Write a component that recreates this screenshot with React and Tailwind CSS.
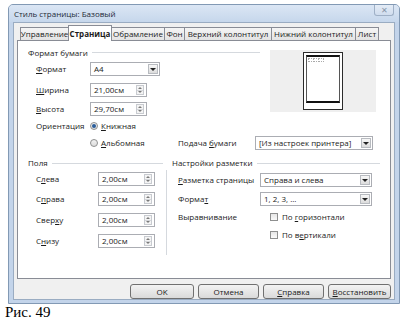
import React from 'react';

const U = ({ children }) => <span className="underline underline-offset-[1px]">{children}</span>;

const Spin = () => (
  <div className="ml-auto mr-[2px] flex h-[10px] w-[8px] flex-col border border-[#c8cbd0] bg-[#f4f4f4]">
    <div className="flex flex-1 items-center justify-center border-b border-[#d4d6da]">
      <div className="h-0 w-0 border-x-[2px] border-b-[2px] border-x-transparent border-b-[#7a7a7a]" />
    </div>
    <div className="flex flex-1 items-center justify-center">
      <div className="h-0 w-0 border-x-[2px] border-t-[2px] border-x-transparent border-t-[#7a7a7a]" />
    </div>
  </div>
);

const Drop = () => (
  <div className="ml-auto mr-[1px] flex h-[10px] w-[10px] items-center justify-center border border-[#b8bbc0] bg-gradient-to-b from-[#f8f8f8] to-[#dcdcdc]">
    <div className="h-0 w-0 border-x-[3px] border-t-[3px] border-x-transparent border-t-[#222]" />
  </div>
);

const Box = ({ w, value, spin }) => (
  <div className={`flex h-[14px] items-center border border-[#abadb3] bg-white pl-[3px] ${w}`}>
    <span>{value}</span>
    {spin ? <Spin /> : <Drop />}
  </div>
);

const Radio = ({ on }) => (
  <div className="flex h-[8px] w-[8px] items-center justify-center rounded-full border border-[#8e8f8f] bg-gradient-to-b from-[#f2f2f2] to-[#dcdcdc]">
    {on && <div className="h-[4px] w-[4px] rounded-full bg-[#2a5d9a]" />}
  </div>
);

const Check = () => <div className="h-[8px] w-[8px] border border-[#8e8f8f] bg-gradient-to-b from-[#e6e6e6] to-[#fafafa]" />;

const GroupTitle = ({ children }) => (
  <div className="flex h-[10px] items-center">
    <span>{children}</span>
    <div className="ml-[4px] h-px flex-1 bg-[#d5d9de]" />
  </div>
);

const tabs = [
  ['Управление', 'w-[49px]'],
  ['Страница', 'w-[44px]'],
  ['Обрамление', 'w-[54px]'],
  ['Фон', 'w-[21px]'],
  ['Верхний колонтитул', 'w-[88px]'],
  ['Нижний колонтитул', 'w-[85px]'],
  ['Лист', 'w-[24px]'],
];

const buttons = [
  [<>OK</>, 'w-[64px]'],
  [<>Отмена</>, 'w-[61px]'],
  [<><U>С</U>правка</>, 'w-[61px]'],
  [<><U>В</U>осстановить</>, 'w-[63px]'],
];

export default function App() {
  return (
    <div className="h-[320px] w-[416px] overflow-hidden bg-white pt-[4px] font-['Open_Sans',sans-serif] text-[8px] leading-none text-[#1b1b1b]">
      <div className="ml-[8px] flex h-[300px] w-[392px] flex-col rounded-t-[5px] border border-[#8299b4] bg-[#c3d4ea]">
        <div className="flex h-[17px] items-center rounded-t-[4px] bg-gradient-to-b from-[#dbe6f4] to-[#c6d7ec] pl-[5px] pr-[5px]">
          <span className="text-[#1e2a38]">Стиль страницы: Базовый</span>
          <div className="ml-auto flex h-[11px] w-[20px] items-center justify-center self-start rounded-b-[3px] border border-t-0 border-[#9fb0c6] bg-gradient-to-b from-[#e4ecf6] to-[#d0ddee] text-[8px] text-[#8795a6]">
            ✕
          </div>
        </div>

        <div className="mx-[4px] mb-[3px] flex flex-1 flex-col border border-[#9aacc2] bg-[#f0f0f0]">
          <div className="relative z-10 flex h-[17px] items-end pl-[6px]">
            {tabs.map(([label, w], i) => (
              <div
                key={label}
                className={`${w} ${i > 0 ? '-ml-px' : ''} flex items-center justify-center border border-b-0 border-[#898c95] ${
                  i === 1
                    ? '-mb-px h-[16px] bg-white font-bold'
                    : 'h-[13px] bg-gradient-to-b from-[#f5f5f5] to-[#e3e3e3]'
                }`}
              >
                {label}
              </div>
            ))}
          </div>

          <div className="ml-[3px] h-[239px] w-[374px] border border-[#898c95] bg-white pt-[6px]">
            <div className="flex">
              <div className="w-[242px] pl-[10px]">
                <div className="flex h-[11px] items-center">
                  <span>Формат бумаги</span>
                  <div className="ml-[4px] h-px flex-1 bg-[#d5d9de]" />
                </div>
                <div className="mt-[4px] flex h-[14px] items-center pl-[8px]">
                  <span className="w-[54px]"><U>Ф</U>ормат</span>
                  <Box w="w-[70px]" value="A4" />
                </div>
                <div className="mt-[7px] flex h-[14px] items-center pl-[8px]">
                  <span className="w-[54px]"><U>Ш</U>ирина</span>
                  <Box w="w-[57px]" value="21,00см" spin />
                </div>
                <div className="mt-[5px] flex h-[14px] items-center pl-[8px]">
                  <span className="w-[54px]"><U>В</U>ысота</span>
                  <Box w="w-[57px]" value="29,70см" spin />
                </div>
              </div>
              <div className="ml-[10px] mt-[3px] flex h-[62px] w-[106px] justify-center bg-[#efefef] pt-[2px]">
                <div className="h-[58px] w-[40px] border border-[#2b2b2b] bg-white p-[2px]">
                  <div className="h-[48px] w-full border-x border-y-2 border-x-[#555] border-y-[#111] pl-[1px] pt-[1px]">
                    <div className="flex h-[4px] w-[16px]">
                      <div className="flex-1 border border-dotted border-[#aaa]" />
                      <div className="-ml-px flex-1 border border-dotted border-[#aaa]" />
                      <div className="-ml-px flex-1 border border-dotted border-[#aaa]" />
                    </div>
                  </div>
                </div>
              </div>
            </div>

            <div className="mt-[4px] flex h-[12px] items-center pl-[18px]">
              <span className="w-[54px]">Ориентация</span>
              <Radio on />
              <span className="ml-[3px]"><U>К</U>нижная</span>
            </div>
            <div className="mt-[4px] flex h-[14px] items-center pl-[18px]">
              <div className="w-[54px]" />
              <div className="flex w-[88px] items-center">
                <Radio />
                <span className="ml-[3px]"><U>А</U>льбомная</span>
              </div>
              <span className="w-[77px]">Подача <U>б</U>умаги</span>
              <Box w="w-[118px]" value="[Из настроек принтера]" />
            </div>

            <div className="mt-[8px] flex">
              <div className="w-[148px] pl-[10px] pr-[3px]">
                <GroupTitle>Поля</GroupTitle>
                <div className="mt-[4px] flex h-[14px] items-center pl-[8px]">
                  <span className="w-[62px]">С<U>л</U>ева</span>
                  <Box w="w-[57px]" value="2,00см" spin />
                </div>
                <div className="mt-[6px] flex h-[14px] items-center pl-[8px]">
                  <span className="w-[62px]">С<U>п</U>рава</span>
                  <Box w="w-[57px]" value="2,00см" spin />
                </div>
                <div className="mt-[7px] flex h-[14px] items-center pl-[8px]">
                  <span className="w-[62px]">Свер<U>х</U>у</span>
                  <Box w="w-[57px]" value="2,00см" spin />
                </div>
                <div className="mt-[7px] flex h-[14px] items-center pl-[8px]">
                  <span className="w-[62px]">С<U>н</U>изу</span>
                  <Box w="w-[57px]" value="2,00см" spin />
                </div>
              </div>
              <div className="mt-[12px] h-[85px] w-px bg-[#d5d9de]" />
              <div className="flex-1 pl-[5px] pr-[10px]">
                <GroupTitle>Настройки разметки</GroupTitle>
                <div className="mt-[5px] flex h-[14px] items-center pl-[6px]">
                  <span className="w-[82px]"><U>Р</U>азметка страницы</span>
                  <Box w="w-[112px]" value="Справа и слева" />
                </div>
                <div className="mt-[5px] flex h-[14px] items-center pl-[6px]">
                  <span className="w-[82px]">Форма<U>т</U></span>
                  <Box w="w-[112px]" value="1, 2, 3, ..." />
                </div>
                <div className="mt-[5px] flex h-[12px] items-center pl-[6px]">
                  <span className="w-[92px]">Выравнивание</span>
                  <Check />
                  <span className="ml-[4px]">По <U>г</U>оризонтали</span>
                </div>
                <div className="mt-[6px] flex h-[12px] items-center pl-[6px]">
                  <span className="w-[92px]" />
                  <Check />
                  <span className="ml-[4px]">По в<U>е</U>ртикали</span>
                </div>
              </div>
            </div>
          </div>

          <div className="mt-[5px] flex h-[15px] justify-end gap-[4px] pr-[3px]">
            {buttons.map(([label, w], i) => (
              <div
                key={i}
                className={`${w} flex items-center justify-center rounded-[3px] border border-[#707070] bg-gradient-to-b from-[#f3f3f3] to-[#dadada]`}
              >
                {label}
              </div>
            ))}
          </div>
        </div>
      </div>
      <div className="mt-[1px] pl-[5px] font-['Liberation_Serif',serif] text-[15px] leading-[15px] text-black">Рис. 49</div>
    </div>
  );
}
